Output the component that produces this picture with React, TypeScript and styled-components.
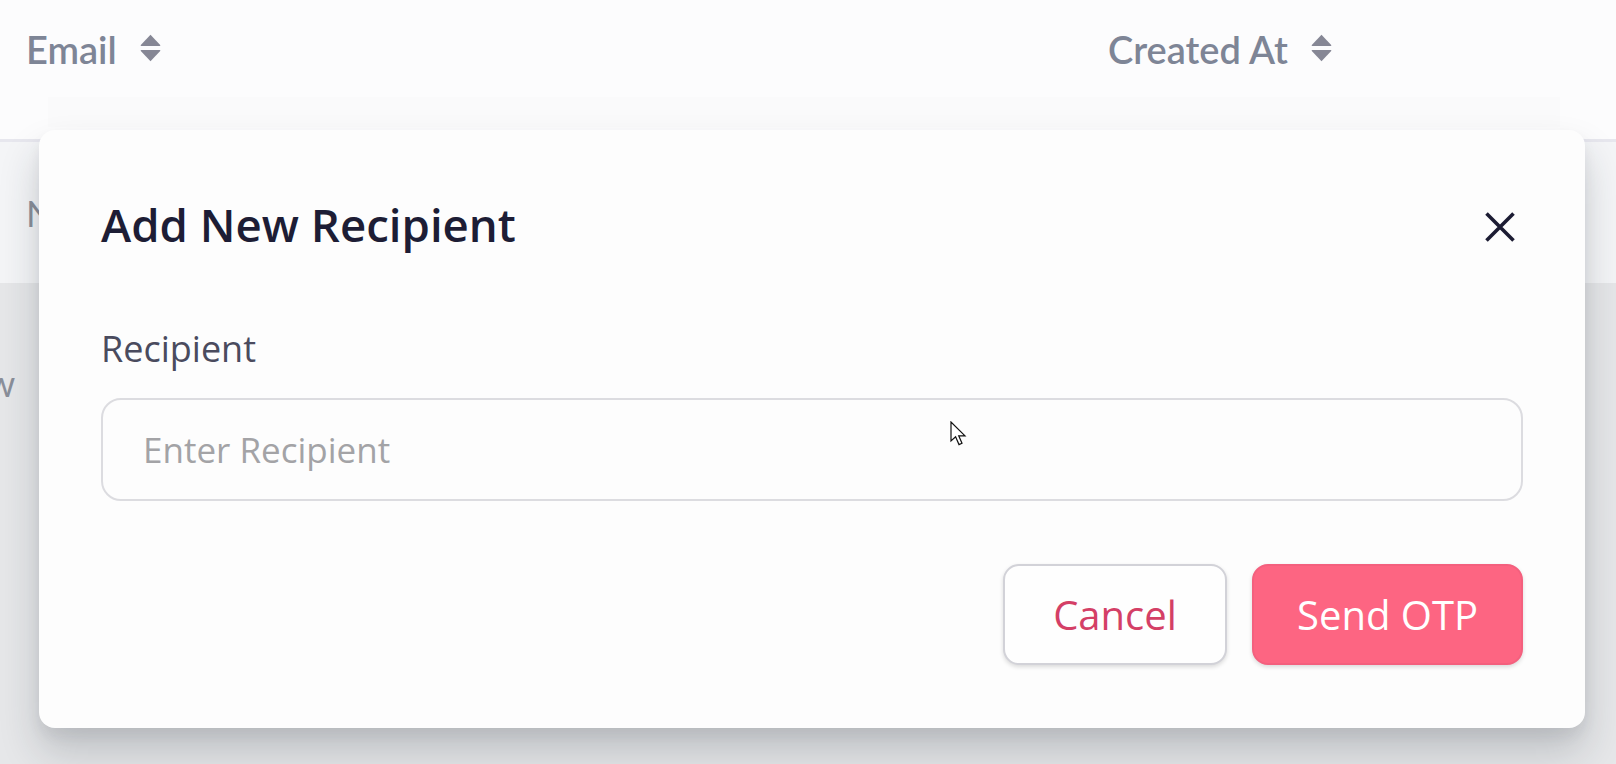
import React from "react";
import styled, { createGlobalStyle } from "styled-components";

const GlobalStyle = createGlobalStyle`
  html, body {
    margin: 0;
    padding: 0;
    background: #fcfcfd;
  }
  * {
    box-sizing: border-box;
  }
`;

const SortIcon = () => (
  <svg width="21" height="28" viewBox="0 0 21 28" fill="#868795">
    <path d="M10.5 0.8 L20.2 11 Q20.8 12 19.6 12 L1.4 12 Q0.2 12 0.8 11 Z" />
    <path d="M1.4 16 L19.6 16 Q20.8 16 20.2 17 L10.5 27.2 L0.8 17 Q0.2 16 1.4 16 Z" />
  </svg>
);

const CloseIcon = () => (
  <svg width="30" height="30" viewBox="0 0 30 30">
    <path d="M1.5 1.5 L28.5 28.5 M28.5 1.5 L1.5 28.5" stroke="#1c1c33" strokeWidth="3.6" />
  </svg>
);

const App: React.FC = () => {
  return (
    <>
      <GlobalStyle />
      <Page>
        <TableHead>
          <HeadRow>
            <HeadCell>
              Email <SortIcon />
            </HeadCell>
            <HeadCell>
              Created At <SortIcon />
            </HeadCell>
          </HeadRow>
          <HeadFade />
        </TableHead>
        <Row $tone="light">
          <Cell>N</Cell>
        </Row>
        <Row $tone="dim" $top>
          <Cell $shift>w</Cell>
        </Row>

        <Modal>
          <ModalHeader>
            <Title>Add New Recipient</Title>
            <CloseButton aria-label="Close">
              <CloseIcon />
            </CloseButton>
          </ModalHeader>
          <Field>
            <Label>Recipient</Label>
            <Input placeholder="Enter Recipient" />
          </Field>
          <Actions>
            <Button $variant="outline">Cancel</Button>
            <Button $variant="primary">Send OTP</Button>
          </Actions>
        </Modal>

        <Cursor width="18" height="26" viewBox="0 0 18 26">
          <path
            d="M1 1 L1 20 L5.6 15.8 L9 23.6 L12 22.3 L8.7 14.8 L15 14.8 Z"
            fill="#ffffff"
            stroke="#111111"
            strokeWidth="1.2"
            strokeLinejoin="miter"
          />
        </Cursor>
      </Page>
    </>
  );
};

export default App;

const Page = styled.div`
  position: relative;
  height: 100vh;
  overflow: hidden;
  display: flex;
  flex-direction: column;
  font-family: Lato, "Liberation Sans", sans-serif;
  background: #fcfcfd;
`;

const TableHead = styled.div`
  height: 142px;
  display: flex;
  flex-direction: column;
  border-bottom: 3px solid #e7e7ee;
`;

const HeadRow = styled.div`
  display: grid;
  grid-template-columns: 1082px 1fr;
  padding: 25px 0 0 26px;
`;

const HeadCell = styled.div`
  display: flex;
  align-items: center;
  gap: 23px;
  font-size: 38px;
  line-height: 48px;
  font-weight: 600;
  color: #7e8596;

  svg {
    margin-top: -2px;
  }
`;

const HeadFade = styled.div`
  height: 30px;
  margin: 24px 56px 0 48px;
  background: #fafafb;
`;

const Row = styled.div<{ $tone: "light" | "dim"; $top?: boolean }>`
  display: flex;
  align-items: ${({ $top }) => ($top ? "flex-start" : "center")};
  height: ${({ $top }) => ($top ? "auto" : "141px")};
  flex: ${({ $top }) => ($top ? 1 : "none")};
  padding: ${({ $top }) => ($top ? "76px 0 0 0" : "0 0 0 26px")};
  background: ${({ $tone }) => ($tone === "light" ? "#f4f5f7" : "#e6e7e9")};
`;

const Cell = styled.span<{ $shift?: boolean }>`
  font-size: 36px;
  line-height: 48px;
  color: #8a8f9a;
  margin-left: ${({ $shift }) => ($shift ? "-13px" : "0")};
`;

const Modal = styled.div`
  position: absolute;
  top: 130px;
  left: 39px;
  right: 31px;
  display: flex;
  flex-direction: column;
  padding: 64px 62px 63px 62px;
  background: #fdfdfd;
  border-radius: 16px;
  box-shadow: 0 24px 40px rgba(30, 40, 50, 0.2), 0 8px 14px rgba(30, 40, 50, 0.06);
  font-family: "Open Sans", "Noto Sans", sans-serif;
`;

const ModalHeader = styled.div`
  display: flex;
  align-items: center;
  justify-content: space-between;
  height: 60px;
`;

const Title = styled.h2`
  margin: 0;
  font-size: 45.6px;
  line-height: 60px;
  font-weight: 600;
  color: #1d1d35;
`;

const CloseButton = styled.button`
  display: flex;
  padding: 0;
  margin: 6px 8px 0 0;
  border: none;
  background: transparent;
  cursor: pointer;
`;

const Field = styled.div`
  display: flex;
  flex-direction: column;
  gap: 25px;
  margin-top: 71px;
`;

const Label = styled.label`
  font-size: 36px;
  line-height: 48px;
  font-weight: 400;
  color: #4a4b5e;
`;

const Input = styled.input`
  width: 100%;
  height: 103px;
  padding: 0 40px;
  border: 2px solid #dcdce0;
  border-radius: 20px;
  background: #fdfdfd;
  font-family: "Open Sans", "Noto Sans", sans-serif;
  font-size: 35px;
  color: #333;
  outline: none;

  &::placeholder {
    color: #a3a3a6;
  }
`;

const Actions = styled.div`
  display: flex;
  justify-content: flex-end;
  gap: 25px;
  margin-top: 63px;
`;

const Button = styled.button<{ $variant: "outline" | "primary" }>`
  height: 101px;
  width: ${({ $variant }) => ($variant === "outline" ? "224px" : "271px")};
  border-radius: 16px;
  font-family: "Open Sans", "Noto Sans", sans-serif;
  font-size: 40px;
  cursor: pointer;
  border: 2px solid ${({ $variant }) => ($variant === "outline" ? "#d2d2d8" : "#f4607e")};
  background: ${({ $variant }) => ($variant === "outline" ? "#fefefe" : "#fd6582")};
  color: ${({ $variant }) => ($variant === "outline" ? "#d43f66" : "#ffffff")};
  box-shadow: 0 2px 4px rgba(0, 0, 0, 0.14);
`;

const Cursor = styled.svg`
  position: absolute;
  left: 950px;
  top: 421px;
  pointer-events: none;
`;
